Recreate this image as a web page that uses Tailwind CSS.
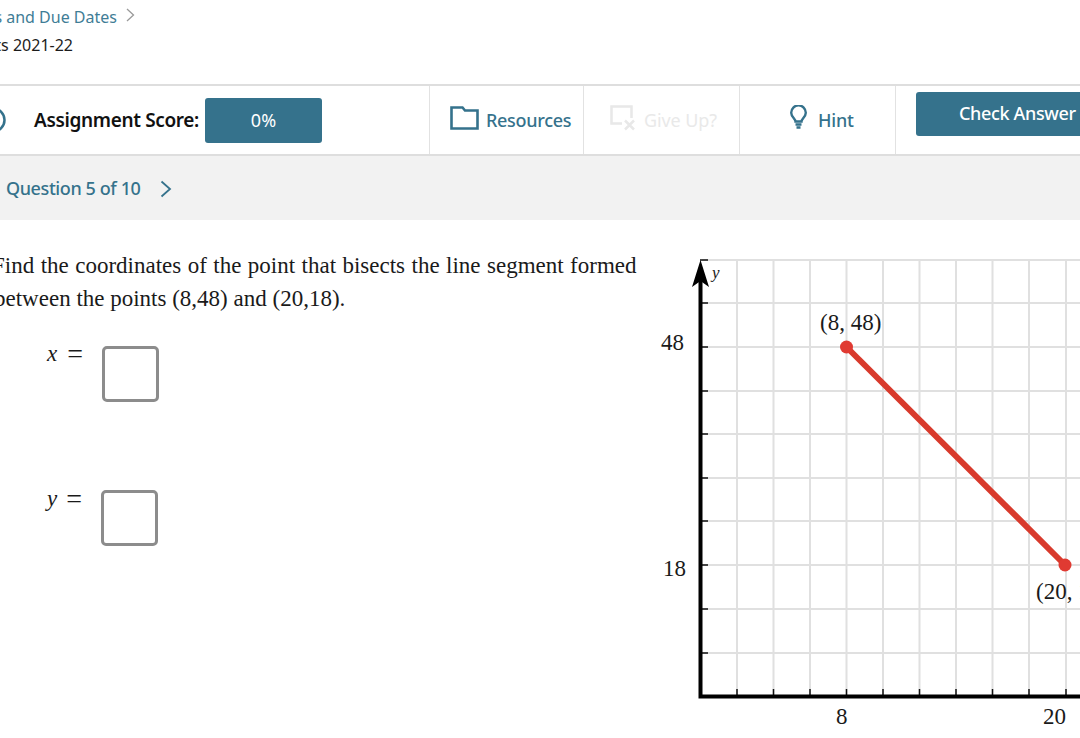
<!DOCTYPE html>
<html lang="en">
<head>
    <meta charset="UTF-8">
    <meta name="viewport" content="width=device-width, initial-scale=1.0">
    <title>Question 5 of 10</title>
    <script src="https://cdn.jsdelivr.net/npm/@tailwindcss/browser@4"></script>
</head>
<body class="bg-white w-[1080px] h-[738px] overflow-hidden font-['Noto_Sans',sans-serif]">

    <!-- Breadcrumb -->
    <header class="h-[86px] border-b-2 border-[#dedede] pt-[5px] text-[16px]">
        <div class="flex items-center h-[23px]">
            <div class="w-[117px] flex justify-end whitespace-nowrap text-[#3f7d96]">Assignments and Due Dates</div>
            <svg class="ml-[9px] mb-[3px]" width="9" height="14" viewBox="0 0 9 14" fill="none" stroke="#9a9a9a" stroke-width="1.3"><path d="M1 1l6.5 6L1 13"/></svg>
        </div>
        <div class="w-[73px] h-[23px] mt-[5px] flex justify-end whitespace-nowrap text-[#1c1c1c]">Assignments 2021-22</div>
    </header>

    <!-- Toolbar -->
    <div class="h-[70px] flex border-b-2 border-[#dedede]">
        <div class="w-[430px] shrink-0 flex items-center border-r border-[#e2e2e2]">
            <svg class="-ml-[20px] shrink-0" width="26" height="26" viewBox="0 0 26 26" fill="none" stroke="#35728c" stroke-width="2.5"><circle cx="13" cy="13" r="11.5"/></svg>
            <span class="ml-[28px] w-[171px] text-[19px] font-semibold tracking-[-0.35px] text-[#111] whitespace-nowrap">Assignment Score:</span>
            <div class="w-[117px] h-[45px] rounded-[3px] bg-[#35728c] text-white text-[18px] flex items-center justify-center">0%</div>
        </div>
        <div class="w-[154px] shrink-0 flex items-center gap-[7px] pl-[20px] border-r border-[#e2e2e2]">
            <svg class="mb-[4px]" width="29" height="24" viewBox="0 0 29 24" fill="none" stroke="#35728c" stroke-width="2.6"><path d="M1.500 22.500V1.500h11l2.500 3h12.500v18z"/></svg>
            <span class="text-[18px] font-medium tracking-[-0.3px] text-[#35728c]">Resources</span>
        </div>
        <div class="w-[156px] shrink-0 flex items-center gap-[9px] pl-[26px] border-r border-[#e2e2e2]">
            <svg class="mb-[4px]" width="25" height="26" viewBox="0 0 25 26" fill="none" stroke="#e8e8e8" stroke-width="2.500"><path d="M12 18.500H1.500V1.500h20V13M15 15.500l9 9M24 15.500l-9 9"/></svg>
            <span class="text-[18px] tracking-[-0.1px] text-[#e9e9e9]">Give Up?</span>
        </div>
        <div class="w-[156px] shrink-0 flex items-center gap-[11px] pl-[50px] border-r border-[#e2e2e2]">
            <svg class="mb-[6px]" width="17" height="24" viewBox="0 0 17 24" fill="none" stroke="#35728c" stroke-width="2.400"><path d="M5.500 16.500c0-3-4.300-4.500-4.300-8.800a7.300 7.300 0 0 1 14.600 0c0 4.300-4.300 5.800-4.300 8.800z"/><path d="M5.500 19.500h6M6.500 22.500h4"/></svg>
            <span class="text-[18px] font-medium tracking-[-0.2px] text-[#35728c]">Hint</span>
        </div>
        <div class="pl-[20px] pt-[6px]">
            <div class="w-[190px] h-[44px] pb-[2px] rounded-l-[3px] bg-[#35728c] text-white text-[18px] font-medium tracking-[-0.35px] flex items-center pl-[43px] whitespace-nowrap">Check Answer</div>
        </div>
    </div>

    <!-- Question nav -->
    <div class="h-[64px] bg-[#f2f2f2] flex items-center pl-[6px] pt-[1px] text-[18px] font-medium tracking-[-0.4px] text-[#35728c]">
        <span>Question 5 of 10</span>
        <svg class="ml-[20px]" width="12" height="18" viewBox="0 0 12 18" fill="none" stroke="#35728c" stroke-width="1.800"><path d="M1.500 1.500L10 9l-8.500 7.500"/></svg>
    </div>

    <!-- Question body -->
    <main class="flex h-[518px]">
        <div class="w-[650px] shrink-0 font-['Liberation_Serif',serif] text-[#1a1a1a]">
            <div class="mt-[29px] text-[23px] leading-[33px] whitespace-nowrap">
                <p class="-ml-[8px] [word-spacing:0.7px]">Find the coordinates of the point that bisects the line segment formed</p>
                <p class="-ml-[6px]">between the points (8,48) and (20,18).</p>
            </div>

            <div class="flex mt-[31px] pl-[47px] h-[56px]">
                <span class="w-[55px] flex items-start gap-[10px] text-[23px] leading-[16px]"><i>x</i><span class="text-[28px]">=</span></span>
                <div class="w-[57px] h-[56px] rounded-[5px] border-[3px] border-[#8c8c8c]"></div>
            </div>
            <div class="flex mt-[88px] pl-[47px] h-[56px]">
                <span class="w-[54px] pt-[1px] flex items-start gap-[9px] text-[23px] leading-[16px]"><i>y</i><span class="text-[28px]">=</span></span>
                <div class="w-[57px] h-[56px] rounded-[5px] border-[3px] border-[#8c8c8c]"></div>
            </div>
        </div>

        <!-- Graph -->
        <svg class="shrink-0" width="430" height="518" viewBox="650 220 430 518" font-family="Liberation Serif" fill="#1a1a1a">
            <g stroke="#e0e0e0" stroke-width="2">
                <path d="M737 260V696M773.500 260V696M810 260V696M846.500 260V696M883 260V696M919.500 260V696M956 260V696M992.500 260V696M1029 260V696M1066 260V696"/>
                <path d="M702 260H1080M702 303H1080M702 347H1080M702 391H1080M702 434H1080M702 478H1080M702 521H1080M702 565H1080M702 609H1080M702 653H1080"/>
            </g>
            <!-- axis ticks -->
            <g stroke="#111" stroke-width="1.500">
                <path d="M700 303H708M700 347H708M700 391H708M700 434H708M700 478H708M700 521H708M700 565H708M700 609H708M700 653H708M700 260H708"/>
                <path d="M737 689V696M773.500 689V696M810 689V696M846.500 689V696M883 689V696M919.500 689V696M956 689V696M992.500 689V696M1029 689V696M1066 689V696"/>
            </g>
            <path d="M700.500 275V696.500H1080" fill="none" stroke="#000" stroke-width="4"/>
            <path d="M700.500 260L709 287L700.500 281L692 287z" fill="#000"/>
            <line x1="846.500" y1="347" x2="1065" y2="565" stroke="#d83a2c" stroke-width="6"/>
            <circle cx="846.500" cy="347" r="6.500" fill="#e03a32"/>
            <circle cx="1065" cy="565" r="6.500" fill="#e03a32"/>
            <text x="712" y="278" font-size="17" font-style="italic">y</text>
            <text x="820" y="330" font-size="23">(8, 48)</text>
            <text x="1036" y="599" font-size="23">(20, 18)</text>
            <text x="661" y="350" font-size="23">48</text>
            <text x="663" y="576" font-size="23">18</text>
            <text x="836" y="724" font-size="23">8</text>
            <text x="1043" y="724" font-size="23">20</text>
        </svg>
    </main>

</body>
</html>
